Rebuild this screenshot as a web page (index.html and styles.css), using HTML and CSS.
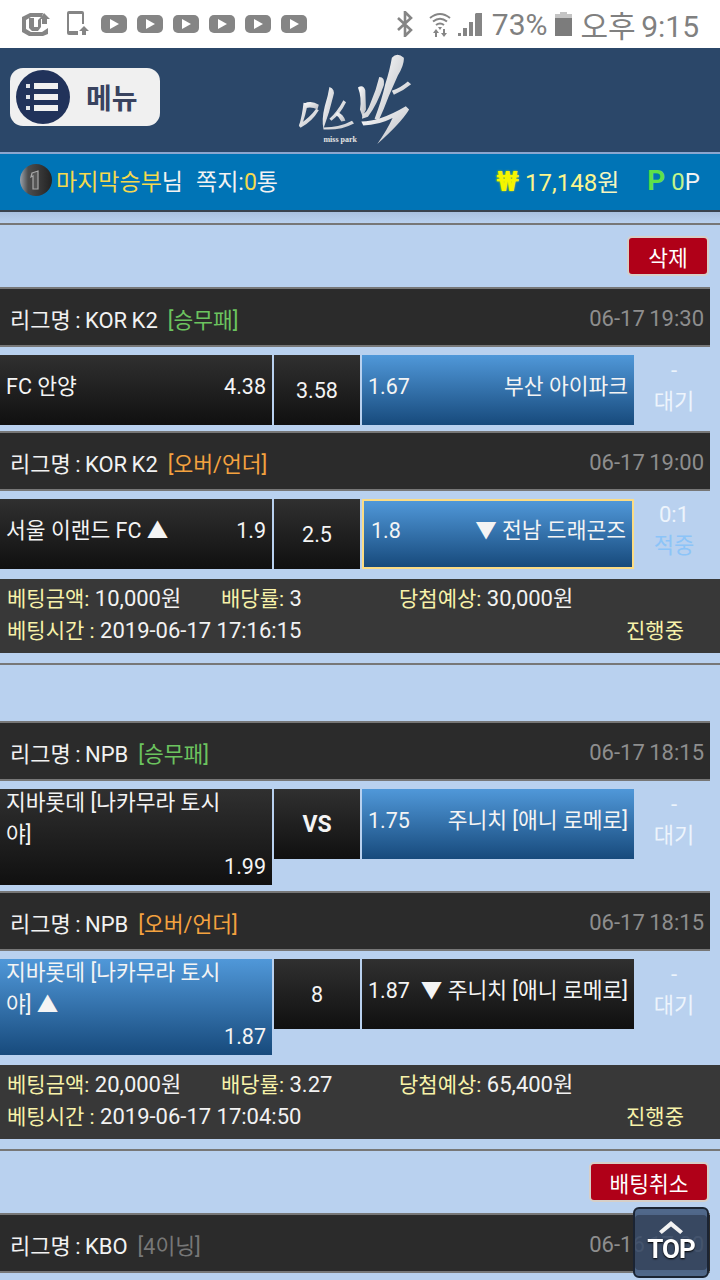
FILE: index.html
```html
<!DOCTYPE html>
<html lang="ko">
<head>
    <meta charset="UTF-8">
    <meta name="viewport" content="width=device-width, initial-scale=1.0">
    <title>미스박</title>
    <link rel="stylesheet" href="styles.css">
</head>
<body>
    <div class="status-bar">
        <svg class="ic-uplus" viewBox="0 0 28 24">
            <path d="M8 1h13l-1 4H9L4 8v9l5 3h11l6-4v6l-5 2H7l-7-4V5z" fill="#858585"/>
            <path d="M7 6h5v9h4V8l3-3v10l-3 4H10l-3-3z" fill="#858585"/>
            <path d="M22 1l6 6h-3v5h-5V7h-2z" fill="#858585"/>
        </svg>
        <svg class="ic-phone" viewBox="0 0 24 26">
            <path d="M3 0h13a2 2 0 0 1 2 2v11h-2V3H3v17h9v4H3a2 2 0 0 1-2-2V2a2 2 0 0 1 2-2z" fill="#858585"/>
            <path d="M18 15l5 5h-3v4h-4v-4h-3z" fill="#858585"/>
        </svg>
        <div class="yt"><i></i></div>
        <div class="yt"><i></i></div>
        <div class="yt"><i></i></div>
        <div class="yt"><i></i></div>
        <div class="yt"><i></i></div>
        <div class="yt"><i></i></div>
        <div class="status-right">
            <svg class="ic-bt" viewBox="0 0 16 26">
                <path d="M1 7l13 12-6 6V1l6 6L1 19" fill="none" stroke="#858585" stroke-width="2.6"/>
            </svg>
            <svg class="ic-wifi" viewBox="0 0 22 25">
                <g fill="none" stroke="#858585" stroke-width="2">
                    <path d="M1 6q10-8 20 0"/>
                    <path d="M4 9.500q7-5.500 14 0"/>
                    <path d="M7 13q4-3 8 0"/>
                </g>
                <path d="M9 15h4l-2 3z" fill="#858585"/>
                <path d="M7 17l3 4H8v4H6v-4H4zM15 25l-3-4h2v-4h2v4h2z" fill="#858585"/>
            </svg>
            <svg class="ic-signal" viewBox="0 0 24 24">
                <path d="M0 24v-3h3v3zM5 24v-8h4v8zM11 24V10h4v14zM17 24V2l1-1h6v23z" fill="#858585"/>
            </svg>
            <span class="pct">73%</span>
            <svg class="ic-batt" viewBox="0 0 17 24">
                <path d="M5 0h7v2h5v22H0V2h5z" fill="#c4c4c4"/>
                <path d="M0 6h17v18H0z" fill="#7c7c7c"/>
            </svg>
            <span class="clock">오후 9:15</span>
        </div>
    </div>

    <div class="top-header">
        <div class="menu-btn">
            <div class="menu-circle">
                <span class="menu-line"></span>
                <span class="menu-line"></span>
                <span class="menu-line"></span>
            </div>
            <span class="menu-text">메뉴</span>
        </div>
        <svg class="logo" viewBox="0 -20 450 280">
            <defs>
                <linearGradient id="brush" x1="0" y1="0" x2="1" y2="1">
                    <stop offset="0" stop-color="#ffffff"/>
                    <stop offset="1" stop-color="#b9bcc2"/>
                </linearGradient>
            </defs>
            <g fill="url(#brush)">
                <path d="M70 130L82 132Q78 165 62 205L56 200Q66 170 70 130Z"/>
                <path d="M72 132Q94 122 116 136L112 150Q94 140 76 146Z"/>
                <path d="M108 148L116 152Q96 186 62 204L58 194Q88 176 108 148Z"/>
                <path d="M148 82Q166 88 160 108 148 160 130 208 124 180 134 140 144 108 148 82Z"/>
                <path d="M190 122L198 128Q180 165 154 184L148 178Q172 156 190 122Z"/>
                <path d="M172 158Q190 165 196 184L184 186Q178 172 166 166Z"/>
                <path d="M130 204Q180 204 216 184L222 192Q180 214 130 210Z"/>
                <path d="M234 84Q250 74 256 92L258 150 248 172 240 150Q246 116 234 84Z"/>
                <path d="M298 52Q316 52 312 76 292 134 264 172L246 178 248 164Q262 160 272 130 288 94 298 52Z"/>
                <path d="M336 -6Q352 -24 372 -6 374 14 354 48 338 84 326 112 312 150 296 184L284 178Q306 120 316 74 330 30 336 -6Z"/>
                <path d="M384 66L394 74Q370 94 342 106L336 94Q364 84 384 66Z"/>
                <path d="M244 186Q300 186 378 140L388 150Q364 190 292 254 322 212 338 176 296 198 250 198Z"/>
            </g>
            <text class="logo-sub" x="130" y="248">miss park</text>
        </svg>
    </div>

    <div class="user-bar">
        <svg class="medal" viewBox="0 0 32 32">
            <defs>
                <linearGradient id="medal-grad" x1="0" y1="0" x2="1" y2="0">
                    <stop offset="0" stop-color="#9aa3ad"/>
                    <stop offset=".25" stop-color="#4d4d4d"/>
                    <stop offset="1" stop-color="#222222"/>
                </linearGradient>
            </defs>
            <circle cx="16" cy="16" r="16" fill="url(#medal-grad)"/>
            <path d="M12 9l6-2v18h-5V12l-2 1z" fill="#555" stroke="#a8a8a8" stroke-width="1.200"/>
        </svg>
        <span class="nick">마지막승부</span><span class="nim">님</span>
        <span class="memo">쪽지:<em>0</em>통</span>
        <span class="money"><b class="won-mark">₩</b><span class="won-num">17,148</span>원</span>
        <span class="point"><b class="p-mark">P</b><span class="p-num">0</span>P</span>
    </div>
    <div class="bar-shade"></div>

    <hr class="sep">
    <div class="actions"><button class="red-btn del-btn">삭제</button></div>

    <div class="league">
        <span>리그명 : KOR K2</span><span class="tag green">[승무패]</span>
        <span class="time">06-17 19:30</span>
    </div>
    <div class="match">
        <div class="cell team">
            <span>FC 안양</span><span>4.38</span>
        </div>
        <div class="cell mid">3.58</div>
        <div class="cell team on">
            <span>1.67</span><span>부산 아이파크</span>
        </div>
        <div class="state"><span>-</span><span>대기</span></div>
    </div>

    <div class="league">
        <span>리그명 : KOR K2</span><span class="tag orange">[오버/언더]</span>
        <span class="time">06-17 19:00</span>
    </div>
    <div class="match">
        <div class="cell team">
            <span>서울 이랜드 FC ▲</span><span>1.9</span>
        </div>
        <div class="cell mid">2.5</div>
        <div class="cell team on picked">
            <span>1.8</span><span>▼ 전남 드래곤즈</span>
        </div>
        <div class="state"><span>0:1</span><span class="hit">적중</span></div>
    </div>

    <div class="bet-info">
        <div><label>베팅금액:</label> 10,000원</div>
        <div><label>배당률:</label> 3</div>
        <div><label>당첨예상:</label> 30,000원</div>
        <div class="span2"><label>베팅시간 :</label> 2019-06-17 17:16:15</div>
        <div class="progress"><label>진행중</label></div>
    </div>

    <hr class="sep">
    <div class="actions"></div>

    <div class="league">
        <span>리그명 : NPB</span><span class="tag green">[승무패]</span>
        <span class="time">06-17 18:15</span>
    </div>
    <div class="match">
        <div class="cell team tall">
            <span class="name">지바롯데 [나카무라 토시야]</span><span class="odds">1.99</span>
        </div>
        <div class="cell mid vs">VS</div>
        <div class="cell team on">
            <span>1.75</span><span>주니치 [애니 로메로]</span>
        </div>
        <div class="state"><span>-</span><span>대기</span></div>
    </div>

    <div class="league">
        <span>리그명 : NPB</span><span class="tag orange">[오버/언더]</span>
        <span class="time">06-17 18:15</span>
    </div>
    <div class="match">
        <div class="cell team tall on">
            <span class="name">지바롯데 [나카무라 토시야] ▲</span><span class="odds">1.87</span>
        </div>
        <div class="cell mid">8</div>
        <div class="cell team">
            <span>1.87</span><span>▼ 주니치 [애니 로메로]</span>
        </div>
        <div class="state"><span>-</span><span>대기</span></div>
    </div>

    <div class="bet-info">
        <div><label>베팅금액:</label> 20,000원</div>
        <div><label>배당률:</label> 3.27</div>
        <div><label>당첨예상:</label> 65,400원</div>
        <div class="span2"><label>베팅시간 :</label> 2019-06-17 17:04:50</div>
        <div class="progress"><label>진행중</label></div>
    </div>

    <hr class="sep">
    <div class="actions"><button class="red-btn cancel-btn">배팅취소</button></div>

    <div class="league">
        <span>리그명 : KBO</span><span class="tag gray">[4이닝]</span>
        <span class="time">06-16 17:00</span>
    </div>

    <div class="top-btn">
        <svg class="top-arrow" viewBox="0 0 26 14">
            <path d="M0 11L13 0l13 11-3 3L13 6 3 14z" fill="#f2f2f2"/>
        </svg>
        <span>TOP</span>
    </div>
</body>
</html>
```

FILE: styles.css
```css
body {
    margin: 0;
    height: 1280px;
    overflow: hidden;
    background: #b9d1ef;
    font-family: Roboto, "Noto Sans CJK KR", sans-serif;
    font-size: 22px;
    color: #f2f2f2;
}

/* 상단 상태바 */
.status-bar {
    height: 48px;
    background: #fff;
    display: flex;
    align-items: center;
    padding: 0 21px 0 22px;
    box-sizing: border-box;
    color: #808080;
}
.ic-uplus {
    width: 28px;
    height: 24px;
    margin-right: 16px;
}
.ic-phone {
    width: 24px;
    height: 26px;
    margin-right: 11px;
}
.yt {
    width: 26px;
    height: 18px;
    background: #858585;
    border-radius: 5px;
    margin-right: 10px;
    display: flex;
    align-items: center;
    justify-content: center;
}
.yt i {
    border-left: 9px solid #fff;
    border-top: 5px solid transparent;
    border-bottom: 5px solid transparent;
}
.status-right {
    margin-left: auto;
    display: flex;
    align-items: center;
    font-size: 30px;
    white-space: nowrap;
}
.ic-bt {
    width: 16px;
    height: 26px;
    margin-right: 16px;
}
.ic-wifi {
    width: 22px;
    height: 25px;
    margin-right: 7px;
}
.ic-signal {
    width: 24px;
    height: 24px;
    margin-right: 10px;
}
.ic-batt {
    width: 17px;
    height: 24px;
    margin: 0 9px 0 7px;
}
.clock {
    word-spacing: -2px;
}

/* 로고 영역 */
.top-header {
    height: 106px;
    box-sizing: border-box;
    background: #2b4769;
    border-bottom: 2px solid #8ba6cf;
    display: flex;
    align-items: flex-start;
    padding: 20px 0 0 10px;
}
.menu-btn {
    width: 150px;
    height: 58px;
    background: #f0f0f0;
    border-radius: 13px;
    display: flex;
    align-items: center;
    padding-left: 6px;
    box-sizing: border-box;
}
.menu-circle {
    width: 54px;
    height: 54px;
    border-radius: 50%;
    background: #21325a;
    display: flex;
    flex-direction: column;
    justify-content: center;
    gap: 5px;
    box-sizing: border-box;
}
.menu-line {
    display: block;
    position: relative;
    width: 24px;
    height: 6px;
    margin-left: 18px;
    background: #f0f0f0;
}
.menu-line::before {
    content: "";
    position: absolute;
    left: -8px;
    top: 1px;
    width: 4px;
    height: 4px;
    background: #e2e4ea;
}
.menu-text {
    margin-left: 16px;
    font-size: 28px;
    font-weight: 700;
    color: #39435f;
}
.logo {
    width: 150px;
    height: 93px;
    margin: -15px 0 0 120px;
}
.logo-sub {
    font-family: "Liberation Serif", serif;
    font-size: 24px;
    font-weight: 700;
    fill: #e4e4e4;
}

/* 회원 정보 */
.user-bar {
    height: 58px;
    box-sizing: border-box;
    background: #0074b6;
    border-bottom: 2px solid #39424e;
    display: flex;
    align-items: center;
    padding: 0 20px 4px;
    font-size: 23px;
    white-space: nowrap;
}
.medal {
    width: 32px;
    height: 32px;
    margin-right: 4px;
}
.nick {
    color: #f5d94e;
}
.memo {
    margin-left: 13px;
}
.memo em {
    font-style: normal;
    color: #f5d94e;
}
.money {
    margin-left: auto;
    font-size: 24px;
    color: #f6f6c0;
}
.won-mark {
    color: #f5f500;
    font-size: 28px;
    margin-right: 6px;
    text-shadow: 0 0 2px #d8e000;
}
.won-num {
    color: #fbf58e;
}
.point {
    margin-left: 28px;
    font-size: 24px;
}
.p-mark {
    color: #5ee04a;
    font-size: 28px;
    margin-right: 6px;
}
.p-num {
    color: #c2f58c;
}
.bar-shade {
    height: 11px;
    background: linear-gradient(#a9c0df, #b9d1ef);
}

.sep {
    height: 2px;
    margin: 0;
    border: 0;
    background: #777;
}
.actions {
    min-height: 56px;
    display: flex;
    justify-content: flex-end;
    align-items: flex-start;
}
.red-btn {
    height: 40px;
    margin: 11px 11px 11px 0;
    padding: 0;
    background: #b00018;
    border: 2px solid #d6cfc8;
    border-radius: 5px;
    color: #fff;
    font-family: inherit;
    font-size: 21.500px;
}
.del-btn {
    width: 82px;
}
.cancel-btn {
    width: 120px;
}

/* 경기 목록 */
.league {
    width: 710px;
    height: 60px;
    box-sizing: border-box;
    background: #2b2b2b;
    border-top: 2px solid #777;
    border-bottom: 2px solid #777;
    display: flex;
    align-items: center;
    padding: 2px 6px 0 10px;
    word-spacing: -1px;
}
.tag {
    margin-left: 10px;
    font-size: 21.500px;
}
.green {
    color: #6cc35f;
}
.orange {
    color: #f4a23f;
}
.gray {
    color: #777;
}
.time {
    margin-left: auto;
    color: #8e8e8e;
}
.match {
    display: flex;
    align-items: flex-start;
    gap: 2px;
    margin: 8px 0 6px;
}
.cell {
    height: 70px;
    box-sizing: border-box;
    background: linear-gradient(#303030, #101010);
    color: #f4f4f4;
    font-size: 21.500px;
}
.cell.on {
    background: linear-gradient(#5098d9, #174a7c);
}
.team {
    width: 272px;
    padding: 17px 6px 0;
    display: flex;
    justify-content: space-between;
    align-items: baseline;
    line-height: 30px;
    white-space: nowrap;
}
.team.picked {
    border: 2px solid #fbdc85;
    padding: 15px 6px 0 7px;
}
.team.tall {
    height: 96px;
    padding: 0 6px;
    display: block;
    white-space: normal;
    line-height: 32px;
}
.name {
    display: block;
    width: 216px;
    margin-top: -2px;
}
.odds {
    display: block;
    text-align: right;
}
.mid {
    width: 86px;
    display: flex;
    align-items: center;
    justify-content: center;
}
.vs {
    font-size: 23px;
    font-weight: 700;
}
.state {
    width: 76px;
    display: flex;
    flex-direction: column;
    align-items: center;
    line-height: 31px;
    color: #edf4fc;
}
.hit {
    color: #8cc4f8;
}

/* 베팅 내역 */
.bet-info {
    display: grid;
    grid-template-columns: 214px 178px 1fr;
    margin-top: 10px;
    padding: 5px 36px 5px 7px;
    background: #383838;
    line-height: 30px;
    height: 74px;
    box-sizing: border-box;
    margin-bottom: 10px;
}
.bet-info label {
    color: #f7f2a9;
    font-size: 21px;
}
.span2 {
    grid-column: span 2;
}
.progress {
    justify-self: end;
}

.top-btn {
    position: fixed;
    left: 633px;
    top: 1207px;
    width: 76px;
    height: 71px;
    box-sizing: border-box;
    background: rgba(58, 76, 105, 0.88);
    border: 2px solid #1b2433;
    border-radius: 6px;
    box-shadow: inset 0 6px 0 rgba(81, 105, 140, 0.9), inset 0 -6px 0 rgba(81, 105, 140, 0.9);
    display: flex;
    flex-direction: column;
    align-items: center;
    padding-top: 12px;
    color: #fff;
    font-size: 26px;
    font-weight: 700;
    letter-spacing: -1px;
    line-height: 26px;
    text-shadow: 0 1px 2px #000;
}
.top-arrow {
    width: 24px;
    height: 13px;
    margin-bottom: 2px;
}
```
